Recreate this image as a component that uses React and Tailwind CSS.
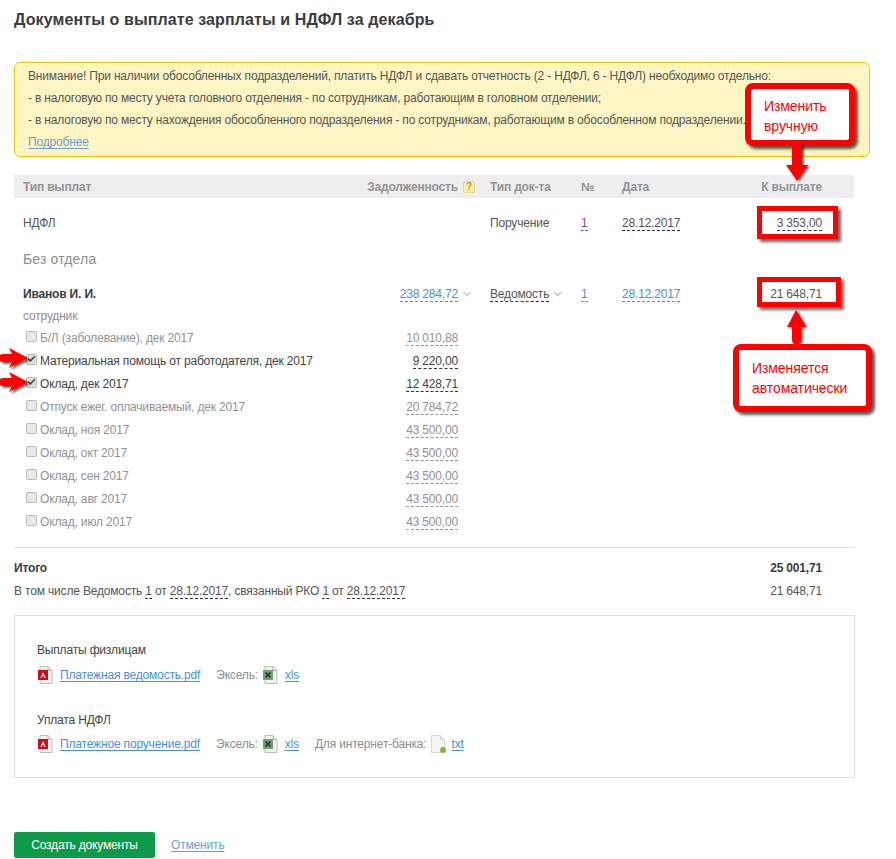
import { Check, ChevronDown } from 'lucide-react'

const items = [
  { label: 'Б/Л (заболевание), дек 2017', sum: '10 010,88' },
  { label: 'Материальная помощь от работодателя, дек 2017', sum: '9 220,00', checked: true },
  { label: 'Оклад, дек 2017', sum: '12 428,71', checked: true },
  { label: 'Отпуск ежег. оплачиваемый, дек 2017', sum: '20 784,72' },
  { label: 'Оклад, ноя 2017', sum: '43 500,00' },
  { label: 'Оклад, окт 2017', sum: '43 500,00' },
  { label: 'Оклад, сен 2017', sum: '43 500,00' },
  { label: 'Оклад, авг 2017', sum: '43 500,00' },
  { label: 'Оклад, июл 2017', sum: '43 500,00' }
]

const Dashed = ({ children, className = '' }) => (
  <span className={`border-b border-dashed leading-[14px] inline-block ${className}`}>{children}</span>
)

const DocShape = ({ children }) => (
  <svg width="16" height="18" viewBox="0 0 16 18" className="shrink-0">
    <path d="M3 .5h8l4 4v13H3z" fill="#f1f1ee" stroke="#bdbdb8" />
    <path d="M11 .5v4h4" fill="#dcdcd7" stroke="#bdbdb8" />
    {children}
  </svg>
)

const PdfIcon = () => (
  <DocShape>
    <rect x="1" y="4" width="10" height="10" fill="#c8101c" />
    <path d="M6 6l2.6 6H7.4L6 9l-1.4 3H3.4z" fill="#fff" />
  </DocShape>
)

const XlsIcon = () => (
  <DocShape>
    <rect x="1" y="4" width="10" height="10" fill="#6f9f74" />
    <path d="M3.5 6.5l5 5M8.5 6.5l-5 5" stroke="#16361b" strokeWidth="1.6" />
  </DocShape>
)

const TxtIcon = () => (
  <svg width="18" height="20" viewBox="0 0 18 20" className="shrink-0">
    <path d="M1.5 1.5h9l4 4v13h-13z" fill="#f4f4f2" stroke="#d6d6d2" />
    <path d="M10.5 1.5v4h4" fill="#e4e4e0" stroke="#d6d6d2" />
    <circle cx="13" cy="16" r="3" fill="#7db92f" />
  </svg>
)

const FileLink = ({ children }) => (
  <a className="text-[#4a90d9] underline underline-offset-2">{children}</a>
)

const Callout = ({ className, children }) => (
  <div className={`absolute bg-white border-[6px] border-[#ff0000] rounded-lg shadow-[3px_3px_3px_rgba(0,0,0,0.65)] text-[#ff0000] text-sm leading-5 tracking-[-0.08px] ${className}`}>
    {children}
  </div>
)

const Frame = ({ className }) => (
  <div className={`absolute border-[5px] border-[#ff0000] shadow-[3px_3px_3px_rgba(0,0,0,0.6)] ${className}`} />
)

const SmallArrow = ({ className }) => (
  <svg width="30" height="22" viewBox="0 0 30 22" className={`absolute drop-shadow-[2px_2px_1px_rgba(0,0,0,0.6)] ${className}`}>
    <path d="M3 6h9L9 0l19 10-19 10 3-6H3a4 4 0 0 1 0-8z" fill="#ff0000" />
  </svg>
)

export default function App() {
  return (
    <div className="relative w-[896px] h-[859px] overflow-hidden bg-white font-['Liberation_Sans',Arial,sans-serif] text-xs tracking-[-0.17px] text-[#555]">
      <div className="pl-[14px] w-[854px]">
        <h1 className="h-[62px] pt-[10px] text-base leading-[19px] font-bold text-[#3c3c3c] tracking-[0.11px]">
          Документы о выплате зарплаты и НДФЛ за декабрь
        </h1>

        <div className="w-[856px] h-[95px] border border-[#ecc800] rounded-md bg-[#fdf5c3] pl-[13px] pt-[2px] leading-[22px] text-[#555]">
          <p>Внимание! При наличии обособленных подразделений, платить НДФЛ и сдавать отчетность (2 - НДФЛ, 6 - НДФЛ) необходимо отдельно:</p>
          <p>- в налоговую по месту учета головного отделения - по сотрудникам, работающим в головном отделении;</p>
          <p>- в налоговую по месту нахождения обособленного подразделения - по сотрудникам, работающим в обособленном подразделении.</p>
          <a className="text-[#6a9fd6] underline underline-offset-2">Подробнее</a>
        </div>

        <div className="mt-[18px] h-[23px] bg-[#eeeeee] grid grid-cols-[476px_91px_41px_100px_100px] items-center font-bold text-[#929292]">
          <div className="flex justify-between pl-[9px] pr-[15px]">
            <span>Тип выплат</span>
            <span className="flex items-center gap-[5px]">
              Задолженность
              <span className="w-3 h-3 bg-[#fbeeb0] border border-[#e6d98c] rounded-[2px] text-[#b59b2d] text-[10px] leading-[10px] text-center font-bold">?</span>
            </span>
          </div>
          <span>Тип док-та</span>
          <span>№</span>
          <span>Дата</span>
          <span className="text-right">К выплате</span>
        </div>

        <div className="h-[50px] grid grid-cols-[476px_91px_41px_100px_100px] items-center text-[#555]">
          <span className="pl-[9px]">НДФЛ</span>
          <span>Поручение</span>
          <span><Dashed className="text-[#7a4a8c] border-[#555]">1</Dashed></span>
          <span><Dashed className="border-[#333]">28.12.2017</Dashed></span>
          <span className="text-right"><Dashed className="border-[#333]">3 353,00</Dashed></span>
        </div>

        <div className="h-[22px] pl-[9px] text-sm leading-[22px] tracking-[0.15px] text-[#8e8e8e]">Без отдела</div>

        <div className="mt-[12px] h-[24px] grid grid-cols-[476px_91px_41px_100px_100px] items-center">
          <div className="flex justify-between pl-[9px] pr-[17px]">
            <span className="font-bold text-[#3c3c3c]">Иванов И. И.</span>
            <span className="flex items-center gap-[3px]">
              <Dashed className="text-[#4a90d9] border-[#4a90d9]">238 284,72</Dashed>
              <ChevronDown size={12} strokeWidth={1.75} className="text-[#4a90d9]" />
            </span>
          </div>
          <span className="flex items-center gap-[3px]">
            <Dashed className="border-[#333]">Ведомость</Dashed>
            <ChevronDown size={12} strokeWidth={1.75} className="text-[#777]" />
          </span>
          <span><Dashed className="text-[#4a90d9] border-[#4a90d9]">1</Dashed></span>
          <span><Dashed className="text-[#4a90d9] border-[#4a90d9]">28.12.2017</Dashed></span>
          <span className="text-right">21 648,71</span>
        </div>

        <div className="h-[20px] pl-[9px] leading-[20px] text-[#8e8e8e]">сотрудник</div>

        <div className="w-[444px]">
          {items.map((item) => (
            <div key={item.label} className={`h-[23px] flex items-center ${item.checked ? 'text-[#444]' : 'text-[#929292]'}`}>
              <span className={`ml-[12px] mr-[3px] mb-[3px] w-[11px] h-[11px] flex items-center justify-center rounded-[2px] border border-[#bbb] ${item.checked ? 'bg-[#ddd]' : 'bg-[#e9e9e9]'}`}>
                {item.checked && <Check size={10} strokeWidth={4} className="text-[#444]" />}
              </span>
              <span>{item.label}</span>
              <span className="ml-auto">
                <Dashed className={item.checked ? 'border-[#333]' : 'border-[#929292]'}>{item.sum}</Dashed>
              </span>
            </div>
          ))}
        </div>

        <div className="mt-[14px] w-[841px] border-t border-[#dedede]" />

        <div className="mt-[8px] w-[808px] h-[23px] flex justify-between items-center font-bold text-[#3c3c3c]">
          <span>Итого</span>
          <span>25 001,71</span>
        </div>
        <div className="w-[808px] h-[23px] flex justify-between items-center">
          <span>
            В том числе Ведомость <Dashed className="border-[#333]">1</Dashed> от <Dashed className="border-[#333]">28.12.2017</Dashed>, связанный РКО <Dashed className="border-[#333]">1</Dashed> от <Dashed className="border-[#333]">28.12.2017</Dashed>
          </span>
          <span>21 648,71</span>
        </div>

        <div className="mt-[13px] w-[841px] h-[163px] border border-[#dedede] pl-[22px] pt-[26px]">
          <div className="h-[16px] leading-[16px] text-[#444]">Выплаты физлицам</div>
          <div className="mt-[8px] h-[18px] flex items-center">
            <PdfIcon />
            <span className="ml-[7px]"><FileLink>Платежная ведомость.pdf</FileLink></span>
            <span className="ml-[16px] text-[#8e8e8e]">Эксель:</span>
            <span className="ml-[4px]"><XlsIcon /></span>
            <span className="ml-[7px]"><FileLink>xls</FileLink></span>
          </div>
          <div className="mt-[28px] h-[16px] leading-[16px] text-[#444]">Уплата НДФЛ</div>
          <div className="mt-[7px] h-[18px] flex items-center">
            <PdfIcon />
            <span className="ml-[7px]"><FileLink>Платежное поручение.pdf</FileLink></span>
            <span className="ml-[16px] text-[#8e8e8e]">Эксель:</span>
            <span className="ml-[4px]"><XlsIcon /></span>
            <span className="ml-[7px]"><FileLink>xls</FileLink></span>
            <span className="ml-[16px] text-[#8e8e8e]">Для интернет-банка:</span>
            <span className="ml-[4px]"><TxtIcon /></span>
            <span className="ml-[3px]"><FileLink>txt</FileLink></span>
          </div>
        </div>

        <div className="mt-[54px] flex items-center gap-4">
          <button className="w-[141px] h-[26px] bg-[#0f9a4a] rounded-[2px] text-white text-xs">Создать документы</button>
          <a className="text-[#6a9fd6] underline underline-offset-2">Отменить</a>
        </div>
      </div>

      {/* annotations over the page */}
      <Callout className="left-[745px] top-[83px] w-[110px] h-[63px] pl-[13px] pt-[7px]">Изменить<br />вручную</Callout>
      <svg width="26" height="38" viewBox="0 0 26 38" className="absolute left-[785px] top-[145px] drop-shadow-[2px_1px_1px_rgba(0,0,0,0.6)]">
        <path d="M7 0h10v20h6L12 36 1 20h6z" fill="#ff0000" />
      </svg>
      <Frame className="left-[757px] top-[206px] w-[81px] h-[33px]" />
      <Frame className="left-[757px] top-[277px] w-[84px] h-[30px]" />
      <svg width="24" height="36" viewBox="0 0 24 36" className="absolute left-[785px] top-[309px] drop-shadow-[2px_1px_1px_rgba(0,0,0,0.6)]">
        <path d="M11 1l10 17h-5v13a4 4 0 0 1-9 0V18H2z" fill="#ff0000" />
      </svg>
      <Callout className="left-[733px] top-[344px] w-[139px] h-[68px] pl-[13px] pt-[8px]">Изменяется<br />автоматически</Callout>
      <SmallArrow className="left-0 top-[348px]" />
      <SmallArrow className="left-0 top-[372px]" />
    </div>
  )
}
